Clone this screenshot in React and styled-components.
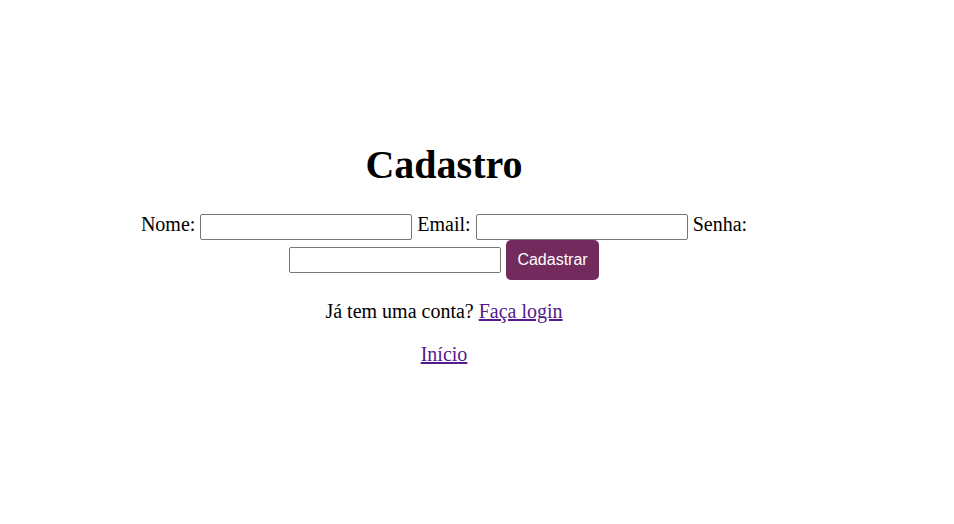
import React from "react";
import styled, { createGlobalStyle } from "styled-components";

const Global = createGlobalStyle`
  html, body { margin: 0; padding: 0; background: #fff; }
  body { font-family: "Liberation Serif", "Times New Roman", serif; color: #000; }
`;

const Page = styled.div`
  padding-top: 142px;
`;

const Container = styled.div`
  width: 628px;
  margin-left: 130px;
  text-align: center;
`;

const Title = styled.h1`
  font-size: 40px;
  font-weight: bold;
  margin: 0 0 25px;
  line-height: 46px;
`;

const Form = styled.form`
  font-size: 20px;
  line-height: normal;
`;

const Input = styled.input`
  box-sizing: border-box;
  width: 212px;
  height: 26px;
  border: 1px solid #767676;
  border-radius: 2px;
  padding: 1px 2px;
  font-size: 13px;
  background: #fff;
`;

const Button = styled.button`
  box-sizing: border-box;
  height: 40px;
  padding: 0 11px;
  border: none;
  border-radius: 5px;
  background: #732a5c;
  color: #fff;
  font-family: "Liberation Sans", Arial, sans-serif;
  font-size: 16px;
  cursor: pointer;
`;

const Para = styled.p`
  font-size: 20px;
  margin: ${(p) => p.$top}px 0 0;
  line-height: normal;
`;

const Link = styled.a`
  color: #551a8b;
  text-decoration: underline;
`;

export default function App() {
  return (
    <>
      <Global />
      <Page>
        <Container>
          <Title>Cadastro</Title>
          <Form onSubmit={(e) => e.preventDefault()}>
            Nome: <Input type="text" /> Email: <Input type="email" /> Senha:{" "}
            <Input type="password" /> <Button type="submit">Cadastrar</Button>
          </Form>
          <Para $top={20}>
            Já tem uma conta? <Link href="#">Faça login</Link>
          </Para>
          <Para $top={20}>
            <Link href="#">Início</Link>
          </Para>
        </Container>
      </Page>
    </>
  );
}
